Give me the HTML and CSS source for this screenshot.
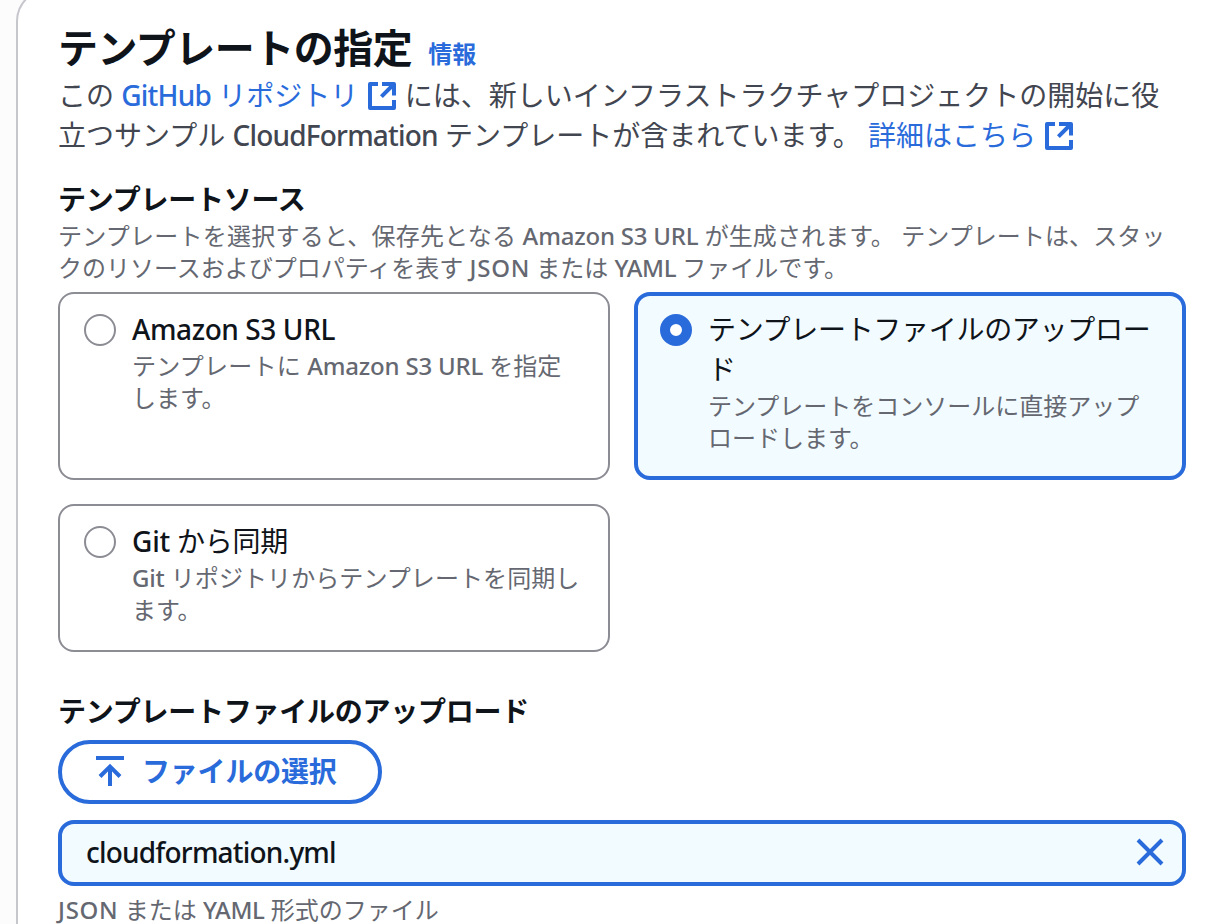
FILE: index.html
```
<!DOCTYPE html>
<html lang="ja">
<head>
<meta charset="utf-8">
<title>テンプレートの指定</title>
<link rel="stylesheet" href="styles.css">
</head>
<body>
<main class="container">
  <header class="header">
    <div class="title-row"><h2 class="title">テンプレートの指定</h2><a class="info">情報</a></div>
    <p class="description">この <a class="link"><span class="lat tight">GitHub</span> リポジトリ <svg class="external" viewBox="0 0 16 16"><path d="M6 2H2v12h12v-4M8 2h6v5.8M14 2 7.7 8.3"/></svg></a> には、新しいインフラストラクチャプロジェクトの開始に役<br>立つサンプル <span class="lat tight">CloudFormation</span> テンプレートが含まれています。 <a class="link more">詳細はこちら <svg class="external" viewBox="0 0 16 16"><path d="M6 2H2v12h12v-4M8 2h6v5.8M14 2 7.7 8.3"/></svg></a></p>
  </header>
  <section class="field">
    <h3 class="label">テンプレートソース</h3>
    <p class="hint source-hint"><span class="loose">テンプレートを選択すると、保存先となる</span> <span class="lat">Amazon S3 URL</span> <span class="wide">が生成されます。 テンプレートは、スタッ</span><br>クのリソースおよびプロパティを表す <span class="lat json">JSON</span> または <span class="lat yaml">YAML</span> ファイルです。</p>
    <div class="tiles">
      <div class="tile">
        <span class="radio"></span>
        <div><div class="tile-label"><span class="lat label-lat">Amazon S3 URL</span></div><p class="hint"><span class="loose">テンプレートに</span> <span class="lat">Amazon S3 URL</span> を指定<br>します。</p></div>
      </div>
      <div class="tile selected">
        <span class="radio checked"></span>
        <div><div class="tile-label">テンプレートファイルのアップロー<br>ド</div><p class="hint">テンプレートをコンソールに直接アップ<br>ロードします。</p></div>
      </div>
      <div class="tile">
        <span class="radio"></span>
        <div><div class="tile-label"><span class="lat">Git</span> から同期</div><p class="hint"><span class="lat">Git</span> <span class="wide">リポジトリからテンプレートを同期し</span><br>ます。</p></div>
      </div>
    </div>
  </section>
  <section class="upload">
    <h3 class="label">テンプレートファイルのアップロード</h3>
    <button class="button"><svg class="upload-icon" viewBox="0 0 32 32"><path d="M2 3h28M16 31V12M6 21.5l10-10 10 10"/></svg>ファイルの選択</button>
    <div class="file"><span class="lat tight">cloudformation.yml</span><svg class="close" viewBox="0 0 28 28"><path d="m2 2 24 24M26 2 2 26"/></svg></div>
    <p class="hint format"><span class="lat json">JSON</span> または <span class="lat yaml">YAML</span> 形式のファイル</p>
  </section>
</main>
</body>
</html>
```
FILE: styles.css
```
* { box-sizing: border-box; }
body {
  margin: 0;
  height: 924px;
  overflow: hidden;
  display: flex;
  background: #fcfcfd;
  color: #0f141a;
  font: 28px/40px "Noto Sans", "Noto Sans CJK JP", sans-serif;
}
h2, h3, p { margin: 0; }
.container {
  flex: none;
  width: 1240px;
  height: 940px;
  margin: -11px 0 0 16px;
  padding: 33px 0 0 40px;
  background: #fff;
  border: 2px solid #c6c6cd;
  border-bottom: 0;
  border-radius: 32px 32px 0 0;
}
.lat { font-family: "Noto Sans", sans-serif; font-weight: 500; letter-spacing: -0.2px; }
.lat.tight { letter-spacing: -0.8px; }
.lat.label-lat { letter-spacing: -0.4px; }
.lat.json { letter-spacing: 0.7px; }
.lat.yaml { letter-spacing: -0.4px; }
.loose { letter-spacing: 0.25px; }
.wide { letter-spacing: 0.08px; }
.title-row { display: flex; align-items: baseline; height: 51px; }
.title { font-size: 40px; line-height: 48px; font-weight: 700; letter-spacing: -0.5px; }
.info { margin-left: 16px; font-size: 24px; font-weight: 700; color: #2a6bdb; }
.description { color: #424650; white-space: nowrap; }
.link { color: #2a6bdb; }
.external {
  width: 32px;
  height: 32px;
  vertical-align: -6px;
  fill: none;
  stroke: #2a6bdb;
  stroke-width: 2;
  stroke-linejoin: round;
}
.field { margin-top: 24px; }
.label { font-size: 28px; line-height: 40px; font-weight: 700; letter-spacing: -0.25px; }
.hint { font-size: 24px; line-height: 32px; color: #656871; white-space: nowrap; }
.source-hint { margin-top: 1px; }
.tiles {
  display: grid;
  grid-template-columns: 552px 552px;
  grid-template-rows: 188px 148px;
  gap: 24px;
  margin-top: 8px;
}
.tile {
  display: flex;
  gap: 16px;
  padding: 15px 24px;
  border: 2px solid #8c8c94;
  border-radius: 16px;
}
.tile .hint { margin-top: 1px; }
.tile.selected { border: 4px solid #2a6bdb; padding: 13px 22px; background: #f2fbff; }
.tile-label { white-space: nowrap; letter-spacing: -0.3px; }
.radio {
  flex: none;
  width: 32px;
  height: 32px;
  margin-top: 5px;
  border: 2px solid #8c8c94;
  border-radius: 50%;
  background: #fff;
}
.radio.checked { border: 10px solid #2a6bdb; }
.upload { margin-top: 39px; }
.button {
  display: flex;
  align-items: center;
  width: 324px;
  height: 64px;
  margin-top: 9px;
  padding: 0 32px 2px;
  border: 4px solid #2a6bdb;
  border-radius: 32px;
  background: #fff;
  color: #2a6bdb;
  font: inherit;
  font-weight: 700;
  letter-spacing: -0.2px;
}
.upload-icon, .close { fill: none; stroke: #2a6bdb; stroke-width: 4; }
.upload-icon { width: 32px; height: 32px; margin-right: 16px; }
.close { width: 28px; height: 28px; }
.file {
  display: flex;
  align-items: center;
  justify-content: space-between;
  width: 1128px;
  height: 66px;
  margin-top: 16px;
  padding: 0 18px 2px 24px;
  border: 4px solid #2a6bdb;
  border-radius: 16px;
  background: #f2fbff;
}
.format { margin-top: 8px; }
```
